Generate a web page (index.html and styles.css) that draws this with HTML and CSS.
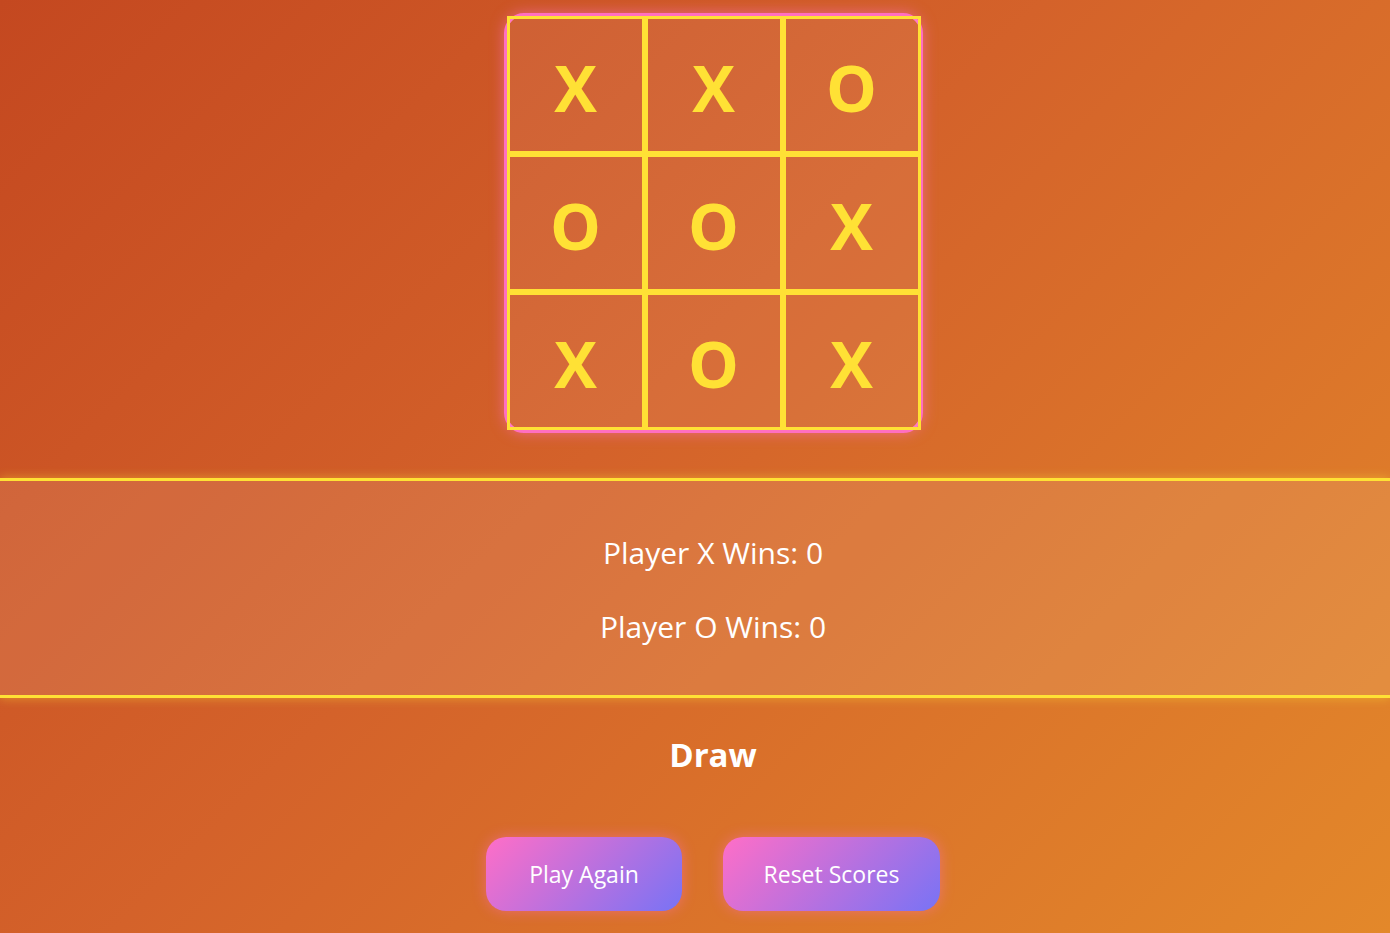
FILE: index.html
```html
<!DOCTYPE html>
<html lang="en">
<head>
<meta charset="utf-8">
<title>Tic Tac Toe</title>
<link rel="stylesheet" href="styles.css">
</head>
<body>
<main class="page">
  <div class="board-wrap">
    <div class="board">
      <div class="cell">X</div>
      <div class="cell">X</div>
      <div class="cell">O</div>
      <div class="cell">O</div>
      <div class="cell">O</div>
      <div class="cell">X</div>
      <div class="cell">X</div>
      <div class="cell">O</div>
      <div class="cell">X</div>
    </div>
  </div>
  <section class="scores">
    <p class="score">Player X Wins: 0</p>
    <p class="score">Player O Wins: 0</p>
  </section>
  <div class="status">Draw</div>
  <div class="actions">
    <button class="btn btn-play">Play Again</button>
    <button class="btn btn-reset">Reset Scores</button>
  </div>
</main>
</body>
</html>
```
FILE: styles.css
```css
html, body {
  margin: 0;
  padding: 0;
  height: 100%;
}
body {
  background: linear-gradient(135deg, #c44820 0%, #d4622a 45%, #e3882a 100%);
  font-family: "Open Sans", "Noto Sans", sans-serif;
  overflow: hidden;
}
.page {
  display: flex;
  flex-direction: column;
  align-items: stretch;
  min-height: 933px;
}
.board-wrap {
  display: flex;
  justify-content: center;
  padding-left: 36px;
  padding-top: 13px;
}
.board {
  display: grid;
  grid-template-columns: repeat(3, 138px);
  grid-template-rows: repeat(3, 138px);
  border: 3px solid #ff6fc0;
  border-radius: 20px;
  box-shadow: 0 0 14px rgba(255, 110, 190, 0.6);
  width: 413px;
  height: 414px;
}
.cell {
  box-sizing: border-box;
  border: 3px solid #ffe135;
  background: rgba(255, 255, 255, 0.07);
  color: #ffe135;
  font-family: "Open Sans", sans-serif;
  font-weight: 700;
  font-size: 64px;
  display: flex;
  align-items: center;
  justify-content: center;
  line-height: 1;
  padding-top: 6px;
}
.scores {
  margin-top: 45px;
  height: 210px;
  border-top: 3px solid #ffe135;
  border-bottom: 3px solid #ffe135;
  background: rgba(255, 255, 255, 0.1);
  box-shadow: 0 0 10px rgba(255, 225, 53, 0.45);
  display: flex;
  flex-direction: column;
  justify-content: center;
  align-items: center;
  padding-left: 36px;
  padding-top: 4px;
  box-sizing: content-box;
  gap: 34px;
}
.score {
  margin: 0;
  color: #fff;
  font-size: 30px;
  line-height: 40px;
}
.status {
  padding-left: 36px;
  margin-top: 35px;
  text-align: center;
  color: #fff;
  font-weight: 700;
  font-size: 33px;
  line-height: 44px;
}
.actions {
  padding-left: 36px;
  margin-top: 60px;
  display: flex;
  justify-content: center;
  gap: 41px;
}
.btn {
  border: none;
  border-radius: 20px;
  height: 74px;
  padding: 0;
  background: linear-gradient(135deg, #ff6ec7 0%, #7873f5 100%);
  color: #fff;
  font-family: "Open Sans", sans-serif;
  font-size: 23px;
  box-shadow: 0 0 14px rgba(255, 110, 199, 0.45);
}
.btn-play {
  width: 196px;
}
.btn-reset {
  width: 217px;
}
```
